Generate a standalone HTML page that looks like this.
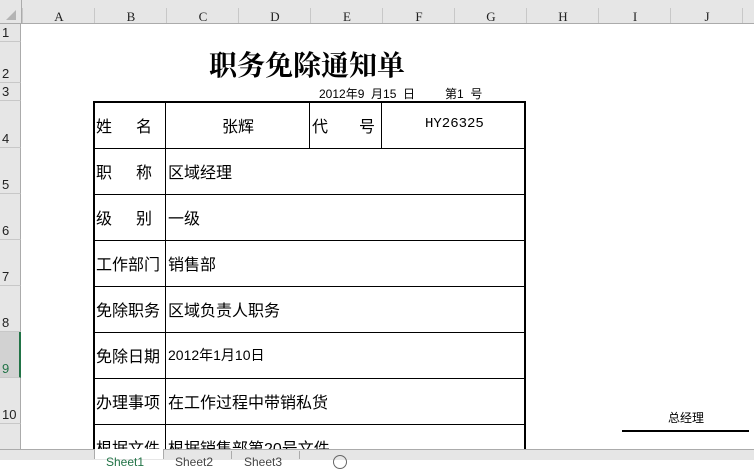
<!DOCTYPE html>
<html><head><meta charset="utf-8"><style>
body{margin:0;width:754px;height:459px;overflow:hidden;background:#fff;font-family:"Liberation Sans","Noto Sans CJK SC",sans-serif;position:relative}
.a{position:absolute}
.ch{top:0;height:23px;background:#e6e6e6;border-bottom:1px solid #ababab;width:754px;left:0}
.cl{position:absolute;top:8px;height:15px;border-left:1px solid #c8c8c8;width:72px;text-align:center;font:13px "Liberation Serif","Noto Serif CJK SC",serif;line-height:17px;color:#222}
.rh{position:absolute;left:0;width:21px;background:#e6e6e6;border-right:1px solid #ababab;border-bottom:1px solid #c8c8c8;box-sizing:border-box;font-size:13px;color:#222;padding-left:2px;display:flex;align-items:flex-end;line-height:16px}
.t{position:absolute;font-size:16px;color:#000;white-space:nowrap;font-family:"Liberation Sans","WenQuanYi Zen Hei",sans-serif}
.hl{position:absolute;left:93px;width:433px;height:1px;background:#000}
</style></head><body>
<div class="a ch"></div>
<div class="a" style="left:0;top:0;width:21px;height:23px;border-right:1px solid #ababab"></div>
<div class="a" style="left:6px;top:10px;width:0;height:0;border-left:10px solid transparent;border-bottom:10px solid #b4b4b4"></div>
<div class="cl" style="left:22px">A</div><div class="cl" style="left:94px">B</div><div class="cl" style="left:166px">C</div><div class="cl" style="left:238px">D</div><div class="cl" style="left:310px">E</div><div class="cl" style="left:382px">F</div><div class="cl" style="left:454px">G</div><div class="cl" style="left:526px">H</div><div class="cl" style="left:598px">I</div><div class="cl" style="left:670px">J</div><div class="cl" style="left:742px"></div>
<div class="rh" style="top:24px;height:18px">1</div>
<div class="rh" style="top:42px;height:41px">2</div>
<div class="rh" style="top:83px;height:18px">3</div>
<div class="rh" style="top:101px;height:47px">4</div>
<div class="rh" style="top:148px;height:46px">5</div>
<div class="rh" style="top:194px;height:46px">6</div>
<div class="rh" style="top:240px;height:46px">7</div>
<div class="rh" style="top:286px;height:46px">8</div>
<div class="rh" style="top:332px;height:46px;background:#d2d2d2;border-right:2px solid #217346;color:#217346">9</div>
<div class="rh" style="top:378px;height:46px">10</div>
<div class="rh" style="top:424px;height:30px"></div>

<div class="t" style="left:209px;top:46px;font-size:28px;font-weight:bold;font-family:'Noto Serif CJK SC',serif;line-height:36px">职务免除通知单</div>
<div class="t" style="left:319px;top:87px;font-size:12px;line-height:14px">2012年9&nbsp;&nbsp;月15&nbsp;&nbsp;日&nbsp;&nbsp;&nbsp;&nbsp;&nbsp;&nbsp;&nbsp;&nbsp;&nbsp;第1&nbsp;&nbsp;号</div>

<div class="a" style="left:93px;top:101px;width:2px;height:350px;background:#000"></div>
<div class="a" style="left:524px;top:101px;width:2px;height:350px;background:#000"></div>
<div class="a" style="left:93px;top:101px;width:433px;height:2px;background:#000"></div>
<div class="a" style="left:165px;top:101px;width:1px;height:350px;background:#000"></div>
<div class="a" style="left:309px;top:101px;width:1px;height:47px;background:#000"></div>
<div class="a" style="left:381px;top:101px;width:1px;height:47px;background:#000"></div>
<div class="hl" style="top:148px"></div><div class="hl" style="top:194px"></div><div class="hl" style="top:240px"></div><div class="hl" style="top:286px"></div><div class="hl" style="top:332px"></div><div class="hl" style="top:378px"></div><div class="hl" style="top:424px"></div>

<div class="t" style="left:96px;top:113px">姓</div><div class="t" style="left:136px;top:113px">名</div>
<div class="t" style="left:222px;top:113px">张辉</div>
<div class="t" style="left:312px;top:113px">代</div><div class="t" style="left:359px;top:113px">号</div>
<div class="t" style="left:425px;top:116px;font-size:14px;font-family:'Liberation Mono',monospace">HY26325</div>
<div class="t" style="left:96px;top:159px">职</div><div class="t" style="left:136px;top:159px">称</div><div class="t" style="left:168px;top:159px">区域经理</div>
<div class="t" style="left:96px;top:205px">级</div><div class="t" style="left:136px;top:205px">别</div><div class="t" style="left:168px;top:205px">一级</div>
<div class="t" style="left:96px;top:251px">工作部门</div><div class="t" style="left:168px;top:251px">销售部</div>
<div class="t" style="left:96px;top:297px">免除职务</div><div class="t" style="left:168px;top:297px">区域负责人职务</div>
<div class="t" style="left:96px;top:343px">免除日期</div><div class="t" style="left:168px;top:345px;font-size:14px">2012年1月10日</div>
<div class="t" style="left:96px;top:389px">办理事项</div><div class="t" style="left:168px;top:389px">在工作过程中带销私货</div>
<div class="t" style="left:96px;top:435px">根据文件</div><div class="t" style="left:168px;top:435px">根据销售部第20号文件</div>

<div class="t" style="left:668px;top:409px;font-size:12px">总经理</div>
<div class="a" style="left:622px;top:430px;width:127px;height:2px;background:#000"></div>

<div class="a" style="left:0;top:449px;width:754px;height:10px;background:#e6e6e6;border-top:1px solid #ababab"></div>
<div class="a" style="left:94px;top:449px;width:68px;height:10px;background:#fff;border-left:1px solid #ababab;border-right:1px solid #ababab"></div>
<div class="t" style="left:106px;top:455px;font-size:12px;color:#217346">Sheet1</div>
<div class="t" style="left:175px;top:455px;font-size:12px;color:#444">Sheet2</div>
<div class="a" style="left:231px;top:451px;width:1px;height:8px;background:#ababab"></div>
<div class="t" style="left:244px;top:455px;font-size:12px;color:#444">Sheet3</div>
<div class="a" style="left:299px;top:451px;width:1px;height:8px;background:#ababab"></div>
<div class="a" style="left:333px;top:455px;width:12px;height:12px;border:1px solid #666;border-radius:50%"></div>
</body></html>
